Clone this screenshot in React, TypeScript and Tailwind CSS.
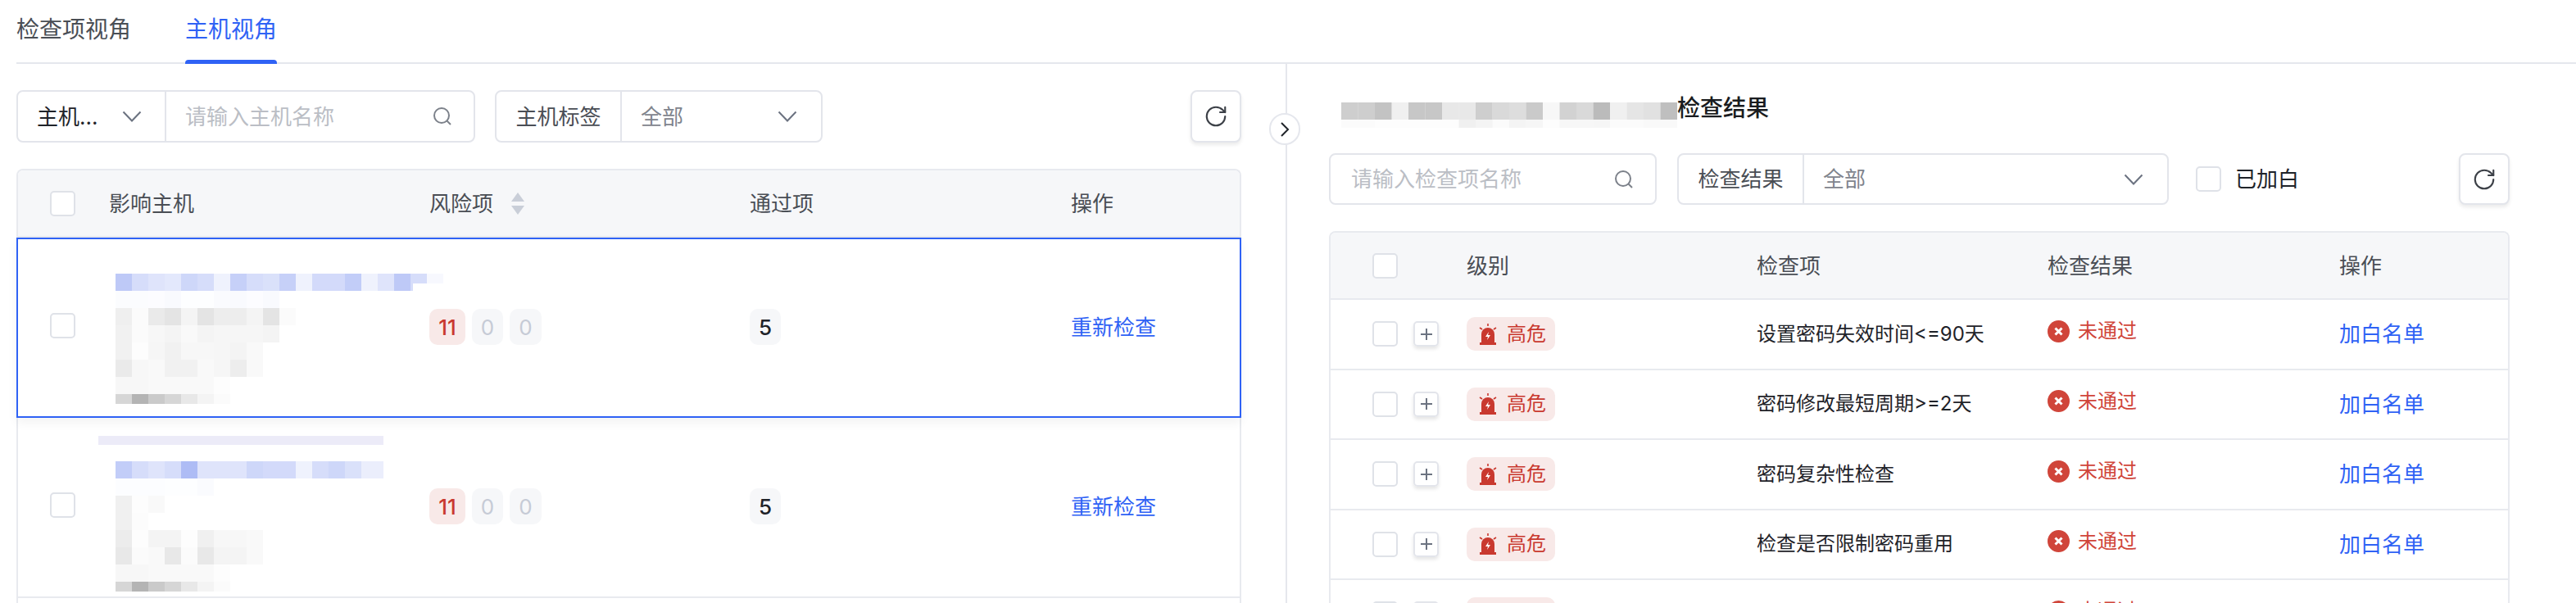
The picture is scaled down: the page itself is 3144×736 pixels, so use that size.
import { RotateCw } from "lucide-react";

const BLUE = "#aebcf5";
const GREY = "#b4b4b4";

type MosaicLine = { h: number; color: string; cells: number[] };

const host1: MosaicLine[] = [
  { h: 21, color: BLUE, cells: [0.8, 0.5, 0.4, 0.35, 0.6, 0.5, 0.2, 0.7, 0.5, 0.45, 0.7, 0.2, 0.55, 0.55, 0.75, 0.2, 0.4, 0.8, 0.5, 0.1] },
  { h: 21, color: BLUE, cells: [0.05, 0.05, 0.04, 0.08, 0.02, 0.02, 0.06, 0.08, 0.04, 0.08] },
  { h: 21, color: GREY, cells: [0.22, 0.05, 0.28, 0.36, 0.15, 0.36, 0.24, 0.24, 0.15, 0.36, 0.05] },
  { h: 21, color: GREY, cells: [0.18, 0.05, 0.1, 0.14, 0.08, 0.14, 0.12, 0.12, 0.12, 0.14] },
  { h: 21, color: GREY, cells: [0.18, 0.03, 0.12, 0.18, 0.1, 0.1, 0.12, 0.14, 0.08] },
  { h: 21, color: GREY, cells: [0.28, 0.1, 0.08, 0.18, 0.18, 0.08, 0.12, 0.24, 0.08] },
  { h: 21, color: GREY, cells: [0.1, 0.1, 0.08, 0.08, 0.08, 0.08, 0.03] },
  { h: 12, color: GREY, cells: [0.55, 1, 0.7, 0.55, 0.3, 0.15, 0.05] },
];

const host2: MosaicLine[] = [
  { h: 21, color: BLUE, cells: [0.75, 0.5, 0.4, 0.5, 1, 0.4, 0.4, 0.4, 0.6, 0.55, 0.55, 0.2, 0.5, 0.6, 0.45, 0.25, 0.25] },
  { h: 21, color: BLUE, cells: [0.03, 0.03, 0.03, 0.02, 0.02, 0.06] },
  { h: 21, color: GREY, cells: [0.2, 0.03, 0.08] },
  { h: 21, color: GREY, cells: [0.2, 0.04] },
  { h: 21, color: GREY, cells: [0.25, 0.03, 0.15, 0.15, 0.03, 0.2, 0.1, 0.1, 0.08] },
  { h: 21, color: GREY, cells: [0.3, 0.05, 0.08, 0.3, 0.05, 0.3, 0.15, 0.15, 0.08] },
  { h: 21, color: GREY, cells: [0.1, 0.1, 0.08, 0.08, 0.08, 0.08, 0.03] },
  { h: 12, color: GREY, cells: [0.55, 1, 0.7, 0.55, 0.3, 0.15, 0.05] },
];

const titleLines: MosaicLine[] = [
  { h: 21, color: GREY, cells: [0.65, 0.65, 0.8, 0.2, 0.75, 0.75, 0.3, 0.3, 0.65, 0.5, 0.45, 0.7, 0.1, 0.6, 0.5, 0.9, 0.2, 0.35, 0.4, 0.85] },
  { h: 10, color: GREY, cells: [0.05, 0.05, 0.03, 0.03, 0.03, 0.03, 0.03, 0.2, 0.15, 0.05, 0.15, 0.12, 0.03, 0.1, 0.1, 0.12, 0.05, 0.05, 0.08, 0.08] },
];

const checks = ["设置密码失效时间<=90天", "密码修改最短周期>=2天", "密码复杂性检查", "检查是否限制密码重用", "检查是否限制密码重用"];

function Mosaic({ lines, width, height, top = 0, left = 0, cellW = 20, cut }: { lines: MosaicLine[]; width: number; height: number; top?: number; left?: number; cellW?: number; cut?: number[] }) {
  let y = top;
  return (
    <svg width={width} height={height} className="block shrink-0 blur-[0.7px]">
      {lines.map((line, i) => {
        const rowY = y;
        y += line.h;
        return line.cells.map((o, j) => (
          <rect key={`${i}-${j}`} x={left + j * cellW} y={rowY} width={cellW} height={line.h} fill={line.color} opacity={o} />
        ));
      })}
      {cut && <rect x={cut[0]} y={cut[1]} width={cut[2]} height={cut[3]} fill="#fff" />}
    </svg>
  );
}

function Chevron({ className = "" }: { className?: string }) {
  return (
    <svg width="24" height="14" viewBox="0 0 24 14" fill="none" className={className}>
      <path d="M1.5 1.5 12 12.5 22.5 1.5" stroke="#6b7280" strokeWidth="2" />
    </svg>
  );
}

function SearchIcon() {
  return (
    <svg width="24" height="24" viewBox="0 0 24 24" fill="none" className="shrink-0">
      <circle cx="11" cy="11" r="9" stroke="#7c818a" strokeWidth="2" />
      <path d="M17.5 17.5 22 22" stroke="#7c818a" strokeWidth="2" />
    </svg>
  );
}

function Checkbox({ className = "" }: { className?: string }) {
  return <div className={`h-[31px] w-[31px] shrink-0 rounded-[5px] border-2 border-[#dfe2e8] bg-white ${className}`} />;
}

function RefreshButton({ className = "" }: { className?: string }) {
  return (
    <button className={`flex items-center justify-center rounded-[8px] border-2 border-[#e3e5eb] bg-white text-[#3c4047] shadow-[0_3px_4px_rgba(0,0,0,0.08)] ${className}`}>
      <RotateCw size={30} strokeWidth={1.7} />
    </button>
  );
}

function SelectGroup({ label, width, labelWidth }: { label: string; width: string; labelWidth: string }) {
  return (
    <div className={`flex h-full items-center rounded-[8px] border-2 border-[#e3e5eb] text-[26px] ${width}`}>
      <div className={`flex h-full items-center justify-center border-r-2 border-[#e3e5eb] text-[#4a4e55] ${labelWidth}`}>{label}</div>
      <span className="ml-[23px] text-[#7f848d]">全部</span>
      <Chevron className="mr-[29px] ml-auto" />
    </div>
  );
}

function Sorter() {
  return (
    <svg width="16" height="27" viewBox="0 0 16 27" className="ml-[22px]">
      <path d="M8 0 16 11H0Z" fill="#c9ced8" />
      <path d="M8 27 16 16H0Z" fill="#c9ced8" />
    </svg>
  );
}

function Alarm() {
  return (
    <svg width="22" height="26" viewBox="0 0 22 26" className="shrink-0">
      <path d="M11 0v3M1 5l3 2M21 5l-3 2" stroke="#c9392f" strokeWidth="1.6" />
      <path d="M3 24V13a8 8 0 0 1 16 0v11Z" fill="#c9392f" />
      <rect x="1" y="23" width="20" height="3" fill="#c9392f" />
      <path d="M12 10 8 16h3l-1 4 4-6h-3Z" fill="#fff" />
    </svg>
  );
}

function FailIcon() {
  return (
    <svg width="27" height="27" viewBox="0 0 27 27" className="shrink-0">
      <circle cx="13.5" cy="13.5" r="13.5" fill="#d0453a" />
      <path d="M9.5 9.5l8 8M17.5 9.5l-8 8" stroke="#fff" strokeWidth="3" />
    </svg>
  );
}

function HostRow({ selected, lines, mosaicClass, mosaicH, mosaicW, mosaicTop, mosaicLeft, cut, band }: { selected?: boolean; lines: MosaicLine[]; mosaicClass: string; mosaicH: number; mosaicW: number; mosaicTop?: number; mosaicLeft?: number; cut?: number[]; band?: boolean }) {
  return (
    <div
      className={
        selected
          ? "relative z-10 -mx-[2px] flex h-[220px] items-center border-2 border-[#2f62f5] bg-white shadow-[0_6px_12px_rgba(0,0,0,0.05)]"
          : "flex h-[220px] items-center border-b-2 border-[#e8eaef] px-0"
      }
    >
      <div className="flex h-full w-[111px] items-center pl-[39px]">
        <Checkbox className="mb-[5px]" />
      </div>
      <div className="flex h-full w-[391px] items-start">
        <div className={`relative ${mosaicClass}`}>
          {band && <div className="absolute top-0 left-0 h-[11px] w-[348px] bg-[#ecebf8]" />}
          <Mosaic lines={lines} width={mosaicW} height={mosaicH} top={mosaicTop} left={mosaicLeft} cut={cut} />
        </div>
      </div>
      <div className="mb-[2px] flex w-[391px] items-center gap-[8px] text-[26px]">
        <div className="flex h-[44px] w-[44px] items-center justify-center rounded-[10px] bg-[#f8e9e8] font-medium text-[#c9392f]">11</div>
        <div className="flex h-[44px] w-[38px] items-center justify-center rounded-[10px] bg-[#f6f7f9] text-[#c6cbd6]">0</div>
        <div className="flex h-[44px] w-[39px] items-center justify-center rounded-[10px] bg-[#f6f7f9] text-[#c6cbd6]">0</div>
      </div>
      <div className="mb-[2px] w-[392px] text-[26px]">
        <div className="flex h-[44px] w-[38px] items-center justify-center rounded-[10px] bg-[#f6f7f9] font-medium text-[#1f2329]">5</div>
      </div>
      <div className="mb-[2px] flex-1 text-[26px] text-[#2f62f5]">重新检查</div>
    </div>
  );
}

export default function App() {
  return (
    <div className="h-[736px] w-[3144px] overflow-hidden bg-white pl-5 font-['Inter','Noto_Sans_CJK_SC',sans-serif]">
      <div className="flex h-[78px] gap-[66px] border-b-2 border-[#e5e7ed] text-[28px]">
        <div className="flex h-full items-center pb-[4px] text-[#4a4e55]">检查项视角</div>
        <div className="relative flex h-full w-[112px] items-center justify-center pb-[4px] text-[#2f62f5]">
          主机视角
          <div className="absolute right-0 -bottom-[2px] left-0 h-[5px] rounded-t-[4px] bg-[#2f62f5]" />
        </div>
      </div>

      <div className="relative flex">
        {/* host side */}
        <div className="w-[1549px] pt-[32px] pr-[54px]">
          <div className="flex h-[64px] gap-[24px]">
            <div className="flex h-full w-[560px] items-center rounded-[8px] border-2 border-[#e3e5eb] text-[26px]">
              <div className="flex h-full w-[181px] items-center border-r-2 border-[#e3e5eb] pr-[28px] pl-[23px]">
                <span className="text-[#1f2329]">主机...</span>
                <Chevron className="ml-auto" />
              </div>
              <span className="ml-[23px] text-[#bbbec5]">请输入主机名称</span>
              <div className="mr-[26px] ml-auto"><SearchIcon /></div>
            </div>
            <SelectGroup label="主机标签" width="w-[400px]" labelWidth="w-[153px]" />
            <RefreshButton className="ml-auto h-full w-[62px]" />
          </div>

          <div className="mt-[32px] rounded-t-[8px] border-x-2 border-t-2 border-[#e8eaef]">
            <div className="flex h-[82px] items-center rounded-t-[6px] border-b-2 border-[#e8eaef] bg-[#f6f7f9] text-[26px] text-[#4a4e55]">
              <div className="w-[111px] pl-[39px]"><Checkbox /></div>
              <div className="w-[391px]">影响主机</div>
              <div className="flex w-[391px] items-center">风险项<Sorter /></div>
              <div className="w-[392px]">通过项</div>
              <div className="flex-1">操作</div>
            </div>
            <HostRow selected lines={host1} mosaicClass="mt-[42px] ml-[8px]" mosaicW={400} mosaicH={160} cut={[363, 12, 40, 12]} />
            <HostRow lines={host2} mosaicClass="mt-[22px] -ml-[13px]" mosaicW={348} mosaicH={190} mosaicTop={31} mosaicLeft={21} band />
            <div className="h-[20px]" />
          </div>
        </div>

        {/* collapse handle */}
        <button className="absolute top-[60px] left-[1529px] z-20 flex h-[39px] w-[38px] items-center justify-center rounded-full border-2 border-[#e5e7ed] bg-white">
          <svg width="12" height="20" viewBox="0 0 12 20" fill="none">
            <path d="M2 2l8 8-8 8" stroke="#1f2329" strokeWidth="2" />
          </svg>
        </button>

        {/* check results side */}
        <div className="h-[658px] flex-1 border-l-2 border-[#e5e7ed] pt-[31px] pr-[81px] pl-[51px]">
          <div className="flex h-[46px] items-center">
            <div className="ml-[15px] pt-[16px]">
              <Mosaic lines={titleLines} width={410} height={31} cellW={20.5} />
            </div>
            <span className="text-[28px] font-medium text-[#1a1c20]">检查结果</span>
          </div>

          <div className="mt-[32px] flex h-[63px] items-center">
            <div className="flex h-full w-[400px] items-center rounded-[8px] border-2 border-[#e3e5eb] text-[26px]">
              <span className="ml-[25px] text-[#bbbec5]">请输入检查项名称</span>
              <div className="mr-[26px] ml-auto"><SearchIcon /></div>
            </div>
            <div className="ml-[25px] h-full">
              <SelectGroup label="检查结果" width="w-[600px]" labelWidth="w-[153px]" />
            </div>
            <Checkbox className="ml-[33px]" />
            <span className="ml-[17px] text-[26px] text-[#1f2329]">已加白</span>
            <RefreshButton className="ml-auto h-full w-[62px]" />
          </div>

          <div className="mt-[32px] rounded-t-[8px] border-x-2 border-t-2 border-[#e8eaef]">
            <div className="flex h-[82px] items-center rounded-t-[6px] border-b-2 border-[#e8eaef] bg-[#f6f7f9] text-[26px] text-[#4a4e55]">
              <div className="w-[166px] pl-[51px]"><Checkbox /></div>
              <div className="w-[354px]">级别</div>
              <div className="w-[355px]">检查项</div>
              <div className="w-[354px]">检查结果</div>
              <div className="flex-1 pl-[2px]">操作</div>
            </div>
            {checks.map((name, i) => (
              <div key={i} className="flex h-[85.5px] items-center border-b-2 border-[#e8eaef]">
                <div className="flex w-[166px] items-center gap-[19px] pl-[51px]">
                  <Checkbox />
                  <div className="flex h-[31px] w-[31px] items-center justify-center rounded-[5px] border-2 border-[#e3e5eb] shadow-[0_3px_4px_rgba(0,0,0,0.1)]">
                    <svg width="14" height="14" viewBox="0 0 14 14">
                      <path d="M7 0v14M0 7h14" stroke="#6b7280" strokeWidth="2" />
                    </svg>
                  </div>
                </div>
                <div className="w-[354px]">
                  <div className="flex h-[41px] w-[108px] items-center gap-[12px] rounded-[10px] bg-[#f8e9e8] pl-[15px] text-[24px] text-[#c9392f]">
                    <Alarm />
                    高危
                  </div>
                </div>
                <div className="w-[355px] text-[24px] text-[#1f2329]">{name}</div>
                <div className="flex w-[354px] items-center gap-[10px] pb-[7px] text-[24px] text-[#d0453a]">
                  <FailIcon />
                  未通过
                </div>
                <div className="flex-1 pl-[2px] text-[26px] text-[#2f62f5]">加白名单</div>
              </div>
            ))}
          </div>
        </div>
      </div>
    </div>
  );
}
